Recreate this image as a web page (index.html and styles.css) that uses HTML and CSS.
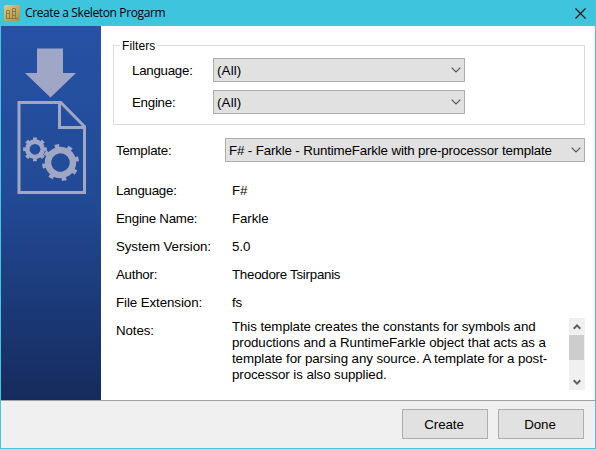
FILE: index.html
```html
<!DOCTYPE html>
<html lang="en">
<head>
<meta charset="utf-8">
<title>Create a Skeleton Progarm</title>
<link rel="stylesheet" href="styles.css">
</head>
<body>
<div class="window">
  <header class="titlebar">
    <svg class="app-icon" width="16" height="16" viewBox="0 0 16 16">
      <defs><linearGradient id="gold" x1="0" y1="0" x2="1" y2="1"><stop offset="0" stop-color="#e0cb88"/><stop offset="1" stop-color="#a98f48"/></linearGradient></defs>
      <rect width="16" height="16" rx="1.500" fill="url(#gold)"/>
      <path d="M2.500 13.500V5.500H5.500V13.500M8.500 13.500V3.500H11.500V13.500M2 13.500H14M2.500 8.500H5.500M8.500 6.500H11.500M8.500 10.500H11.500" fill="none" stroke="#85713a" stroke-opacity=".8"/>
    </svg>
    <h1 class="title">Create a Skeleton Progarm</h1>
    <svg class="close" width="11" height="11" viewBox="0 0 11 11"><path d="M.5 .5l10 10M10.500 .5l-10 10" stroke="#111" stroke-width="1.100"/></svg>
  </header>
  <div class="content">
    <aside class="sidebar">
      <svg width="100" height="180" viewBox="1 26 100 180">
        <g fill="#a0a7c6">
          <path d="M37 48.500H63V73H76L50.500 97.500L25 73H37Z"/>
          <path d="M19 102.500H60.800L84.500 126.500V192.500H19Z M59.500 102.500V127.500H84.500" fill="none" stroke="#a0a7c6" stroke-width="3"/>
        </g>
        <g fill="none" stroke="#a0a7c6">
          <circle cx="35" cy="149.300" r="7.700" stroke-width="4.600"/>
          <circle cx="35" cy="149.300" r="10.400" stroke-width="3" pathLength="80" stroke-dasharray="4.600 5.400" stroke-dashoffset="2.300"/>
          <g transform="rotate(-12 60.5 162.5)">
            <circle cx="60.500" cy="162.500" r="12.500" stroke-width="6.400"/>
            <circle cx="60.500" cy="162.500" r="16.700" stroke-width="3.600" pathLength="80" stroke-dasharray="3.600 6.400" stroke-dashoffset="1.800"/>
          </g>
        </g>
      </svg>
    </aside>
    <main class="panel">
      <section class="filters">
        <h2 class="legend">Filters</h2>
        <div class="filter"><span class="tight">Language:</span>
          <div class="select"><span class="wide">(All)</span><svg width="10" height="6" viewBox="0 0 10 6"><path d="M.7 .7L5 5L9.300 .7"/></svg></div></div>
        <div class="filter"><span class="tight">Engine:</span>
          <div class="select"><span class="wide">(All)</span><svg width="10" height="6" viewBox="0 0 10 6"><path d="M.7 .7L5 5L9.300 .7"/></svg></div></div>
      </section>
      <div class="template"><span class="tight">Template:</span>
        <div class="select"><span class="choice">F# - Farkle - RuntimeFarkle with pre-processor template</span><svg width="10" height="6" viewBox="0 0 10 6"><path d="M.7 .7L5 5L9.300 .7"/></svg></div></div>
      <dl class="details">
        <dt class="tight">Language:</dt><dd>F#</dd>
        <dt class="tight">Engine Name:</dt><dd>Farkle</dd>
        <dt>System Version:</dt><dd>5.0</dd>
        <dt class="tight">Author:</dt><dd class="tight">Theodore Tsirpanis</dd>
        <dt>File Extension:</dt><dd>fs</dd>
        <dt>Notes:</dt>
        <dd class="notes">
          <p>This template creates the constants for symbols and<br>productions and a RuntimeFarkle object that acts as a<br>template for parsing any source. A template for a post-<br>processor is also supplied.</p>
          <div class="scrollbar">
            <svg width="8" height="6" viewBox="0 0 8 6"><path d="M.7 4.700L4 1.400L7.300 4.700"/></svg>
            <div class="thumb"></div>
            <svg class="down" width="8" height="6" viewBox="0 0 8 6"><path d="M.7 1.300L4 4.600L7.300 1.300"/></svg>
          </div>
        </dd>
      </dl>
    </main>
  </div>
  <footer class="footer"><button>Create</button><button>Done</button></footer>
</div>
</body>
</html>
```
FILE: styles.css
```css
* { box-sizing: border-box; }
body, h1, h2, p, dl, dd { margin: 0; }
body { font: 13.333px/16px "Liberation Sans", Arial, sans-serif; letter-spacing: -.09px; color: #000; }
.window { width: 596px; height: 449px; border: 1px solid #48c4dc; border-top: 0; display: flex; flex-direction: column; background: #fff; overflow: hidden; }
.titlebar { height: 26px; flex: none; display: flex; align-items: center; padding: 0 9px 0 3px; background: #3ec5dd; }
.title { flex: 1; margin-left: 5px; font: 12px/16px "Open Sans", "Noto Sans", sans-serif; letter-spacing: -.38px; }
.content { height: 374px; flex: none; display: flex; }
.sidebar { width: 100px; flex: none; background: linear-gradient(#2652a5, #224a96 45%, #162b5d); }
.sidebar svg { display: block; }
.panel { flex: 1; padding: 19px 10px 0 12px; }
.tight { letter-spacing: -.27px; }
.filters { height: 80px; border: 1px solid #dcdcdc; display: flex; flex-direction: column; gap: 8px; }
.legend { align-self: flex-start; height: 12px; margin: -8px 0 0 6px; padding: 0 2px; font-size: 12px; line-height: 16px; font-weight: 400; background: #fff; letter-spacing: .1px; }
.filter { display: flex; align-items: center; padding-left: 18px; }
.filter > span { width: 81px; padding-top: 2px; }
.filter .select { width: 252px; }
.select { height: 24px; display: flex; align-items: center; justify-content: space-between; padding: 0 3px; border: 1px solid #adadad; background: #e1e1e1; white-space: nowrap; }
.select span { padding-top: 2px; }
.wide { letter-spacing: .15px; }
.choice { letter-spacing: -.15px; }
.select svg { fill: none; stroke: #555; stroke-width: 1.200; }
.template { display: flex; align-items: center; margin-top: 13px; padding-left: 3px; }
.template > span { width: 109px; padding-top: 2px; }
.template .select { width: 360px; }
.details { display: grid; grid-template-columns: 116px 1fr; grid-template-rows: repeat(5, 28px); align-items: center; margin-top: 14px; padding-left: 3px; }
.details dt, .details dd:not(.notes) { padding-top: 2px; }
.details dt:last-of-type { align-self: start; padding-top: 7px; }
.notes { display: flex; justify-content: space-between; height: 72px; margin-top: 2px; align-self: start; }
.notes p { padding-top: 1px; white-space: nowrap; }
.scrollbar { width: 16px; height: 72px; display: flex; flex-direction: column; align-items: center; background: #f0f0f0; padding-top: 6px; }
.scrollbar svg { flex: none; fill: none; stroke: #606060; stroke-width: 2; }
.thumb { width: 15px; height: 25px; margin: 5px 1px 0 0; background: #cdcdcd; }
.scrollbar .down { margin-top: 19px; }
.footer { flex: 1; display: flex; gap: 10px; justify-content: flex-end; padding: 8px 11px 0 0; border-top: 1px solid #a0a0a0; background: #f0f0f0; }
.footer button { width: 86px; height: 30px; padding: 2px 2px 0 0; border: 1px solid #adadad; background: #e1e1e1; font: inherit; letter-spacing: inherit; color: inherit; }
```
